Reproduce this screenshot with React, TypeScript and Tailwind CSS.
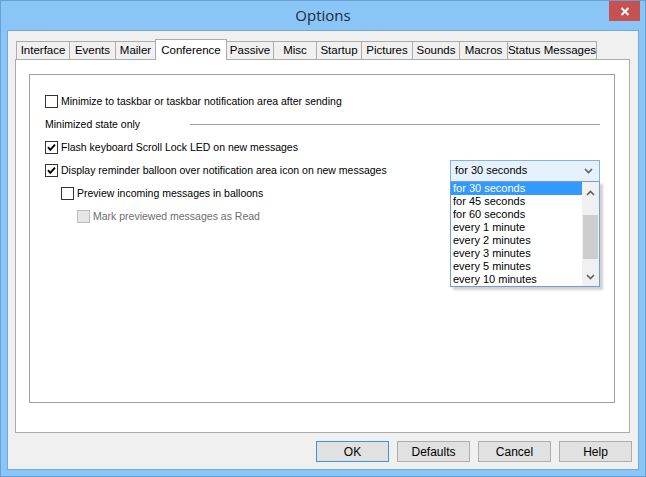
import React from 'react';

const font = "font-['Liberation_Sans',Arial,sans-serif]";

const tabs = [
  { label: 'Interface', w: 54 },
  { label: 'Events', w: 47 },
  { label: 'Mailer', w: 41 },
  { label: 'Conference', w: 72, active: true },
  { label: 'Passive', w: 48 },
  { label: 'Misc', w: 44 },
  { label: 'Startup', w: 46 },
  { label: 'Pictures', w: 52 },
  { label: 'Sounds', w: 48 },
  { label: 'Macros', w: 49 },
  { label: 'Status Messages', w: 90 },
];

const intervals = [
  'for 30 seconds',
  'for 45 seconds',
  'for 60 seconds',
  'every 1 minute',
  'every 2 minutes',
  'every 3 minutes',
  'every 5 minutes',
  'every 10 minutes',
];

function Check({ checked, disabled }: { checked?: boolean; disabled?: boolean }) {
  return (
    <span
      className={`w-[13px] h-[13px] shrink-0 border flex items-center justify-center ${
        disabled ? 'border-[#bcbcbc] bg-[#e6e6e6]' : 'border-[#333333] bg-white'
      }`}
    >
      {checked && (
        <svg width="11" height="11" viewBox="0 0 11 11">
          <path d="M2 5.2 L4.3 7.8 L9 2.6" fill="none" stroke="#000" strokeWidth="1.9" />
        </svg>
      )}
    </span>
  );
}

function Row({
  indent = 0,
  checked,
  disabled,
  children,
}: {
  indent?: number;
  checked?: boolean;
  disabled?: boolean;
  children: React.ReactNode;
}) {
  return (
    <div className={`h-[23px] flex items-center gap-[3px] ${indent === 1 ? 'pl-[16px]' : indent === 2 ? 'pl-[32px]' : ''}`}>
      <Check checked={checked} disabled={disabled} />
      <span className={disabled ? 'text-[#6d6d6d]' : 'text-black'}>{children}</span>
    </div>
  );
}

function Chevron({ up }: { up?: boolean }) {
  return (
    <svg width="9" height="6" viewBox="0 0 9 6">
      <path
        d={up ? 'M1 5 L4.5 1.5 L8 5' : 'M1 1 L4.5 4.5 L8 1'}
        fill="none"
        stroke="#606060"
        strokeWidth="1.6"
      />
    </svg>
  );
}

function IntervalCombo() {
  return (
    <div className="relative w-[150px] text-[11px]">
      <div className="h-[22px] border border-[#7eb4ea] bg-[#e5f1fb] flex items-center justify-between pl-[4px] pr-[6px]">
        <span>for 30 seconds</span>
        <Chevron />
      </div>
      {/* open list */}
      <div className="absolute left-0 top-[21px] w-[150px] h-[106px] border border-[#6f9fd8] bg-white flex shadow-[3px_3px_2px_rgba(0,0,0,0.18)] z-20">
        <div className="flex-1 flex flex-col">
          {intervals.map((item, i) => (
            <div
              key={item}
              className={`h-[13px] leading-[13px] pl-[2px] ${i === 0 ? 'bg-[#3399ff] text-white' : 'text-black'}`}
            >
              {item}
            </div>
          ))}
        </div>
        <div className="w-[17px] bg-[#f0f0f0] flex flex-col">
          <div className="h-[17px] flex items-center justify-center mt-[3px]">
            <Chevron up />
          </div>
          <div className="h-[13px]" />
          <div className="h-[44px] mx-[1px] bg-[#cdcdcd]" />
          <div className="flex-1" />
          <div className="h-[17px] flex items-center justify-center">
            <Chevron />
          </div>
        </div>
      </div>
    </div>
  );
}

function Button({ label, focused }: { label: string; focused?: boolean }) {
  return (
    <button
      className={`w-[73px] h-[21px] border bg-[#e1e1e1] text-[12px] text-black leading-none ${
        focused ? 'border-[#3c94e5]' : 'border-[#adadad]'
      }`}
    >
      {label}
    </button>
  );
}

export default function App() {
  return (
    <div className={`w-[646px] h-[477px] bg-[#8ac5f8] border border-[#6a9fd3] flex flex-col ${font} text-[10.5px] text-black select-none`}>
      {/* Title bar */}
      <div className="relative h-[29px] flex items-center justify-center">
        <span className="font-['Open_Sans',sans-serif] text-[15px] text-[#1c2a3a]">Options</span>
        <div className="absolute top-0 right-[5px] w-[31px] h-[20px] bg-[#c75050] flex items-center justify-center">
          <svg width="10" height="9" viewBox="0 0 10 9">
            <path d="M1.5 1 L8.5 8 M8.5 1 L1.5 8" stroke="#fff" strokeWidth="2" />
          </svg>
        </div>
      </div>

      {/* Client area */}
      <div className="flex-1 mx-[6px] mb-[6px] border border-[#74a8da] bg-[#f0f0f0] flex flex-col">
        {/* Tabs */}
        <div className="flex items-end pl-[8px] pt-[7px] h-[28px] text-[11.5px] whitespace-nowrap">
          {tabs.map((t, i) =>
            t.active ? (
              <div
                key={t.label}
                style={{ width: t.w }}
                className="relative z-10 -ml-px h-[21px] -mb-px bg-white border border-b-0 border-[#acacac] flex justify-center pt-[2px]"
              >
                {t.label}
              </div>
            ) : (
              <div
                key={t.label}
                style={{ width: t.w }}
                className={`h-[18px] ${i === 0 ? '' : '-ml-px'} bg-[#f0f0f0] border border-b-0 border-[#acacac] flex items-center justify-center`}
              >
                {t.label}
              </div>
            ),
          )}
        </div>

        {/* Tab page */}
        <div className="ml-[7px] w-[615px] h-[374px] border border-[#acacac] bg-white pt-[14px] pl-[13px] pr-[14px] pb-[29px]">
          <div className="h-full border border-[#a0a0a0] pt-[15px] pl-[15px] pr-[14px] text-[10.5px]">
            <Row>Minimize to taskbar or taskbar notification area after sending</Row>
            <div className="h-[23px] flex items-center">
              <span className="w-[145px] shrink-0">Minimized state only</span>
              <div className="flex-1 h-px bg-[#a0a0a0]" />
            </div>
            <Row checked>Flash keyboard Scroll Lock LED on new messages</Row>
            <div className="relative z-10 h-[23px] flex items-center justify-between">
              <div className="flex items-center gap-[3px]">
                <Check checked />
                <span>Display reminder balloon over notification area icon on new messages</span>
              </div>
              <IntervalCombo />
            </div>
            <Row indent={1}>Preview incoming messages in balloons</Row>
            <Row indent={2} disabled>
              Mark previewed messages as Read
            </Row>
          </div>
        </div>

        {/* Buttons */}
        <div className="flex justify-end gap-[8px] pr-[6px] mt-[8px]">
          <Button label="OK" focused />
          <Button label="Defaults" />
          <Button label="Cancel" />
          <Button label="Help" />
        </div>
      </div>
    </div>
  );
}
